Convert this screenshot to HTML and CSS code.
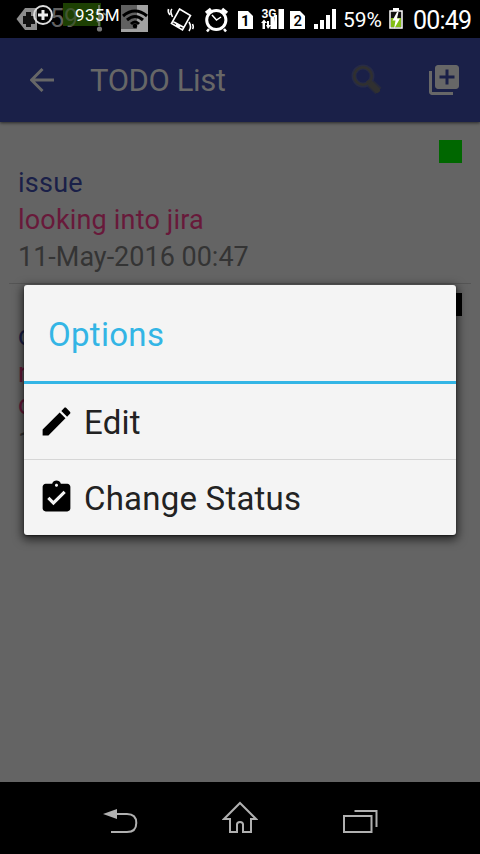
FILE: index.html
```html
<!DOCTYPE html>
<html lang="en">
<head>
<meta charset="utf-8">
<title>TODO List</title>
<link rel="stylesheet" href="styles.css">
</head>
<body>
<div class="phone">
  <header class="status">
    <svg class="notifications" width="160" height="38" viewBox="0 0 160 38">
      <path d="M25 8H37V30H25L16.500 19Z" fill="#8d8d8d"/>
      <path d="M26 12H31V16H35V24H31V27H26V24H23V16H26Z" fill="#111"/>
      <path d="M28 14V24M24 19H33" stroke="#111" stroke-width="3"/>
      <text x="50" y="27" font-size="25" fill="#555">59</text>
      <rect x="63" y="3" width="38" height="23" fill="#1d4003"/>
      <text x="50" y="27" font-size="25" fill="#777" opacity=".4">59</text>
      <path d="M99 5V26M96 12L102 17L97 22M103 13L106 15" stroke="#65735c" stroke-width="2" fill="none"/>
      <circle cx="99.500" cy="29" r="2.600" fill="#777"/>
      <circle cx="43" cy="15" r="9" fill="none" stroke="#ddd" stroke-width="2"/>
      <path d="M38 15H48M43 10V20" stroke="#eee" stroke-width="3"/>
      <rect x="121" y="5" width="27" height="27" fill="#a2a2a2"/>
      <rect x="121" y="5" width="16" height="24" fill="#606060"/>
      <g fill="none" stroke="#000" stroke-width="3"><path d="M123 16Q135 6 147 16M127 20Q135 13 143 20M131 24Q135 20 139 24"/></g>
      <circle cx="135" cy="26" r="2.300"/>
      <text x="75" y="21" font-size="17" textLength="44.500" fill="#fff">935M</text>
    </svg>
    <svg class="tray" width="181" height="38" viewBox="160 0 181 38">
      <g fill="none" stroke="#fff" stroke-width="1.600">
        <path d="M179.500 9L190.500 15.500L182.500 30L171.500 23.500ZM173 21.500L184 27.500M176 24.500L180 27M172 9Q169.500 11 172.500 17M168.500 9Q167.500 12 170 15M189 22Q192 27 189 31M192.500 24Q194 27 192.500 29"/>
      </g>
      <g fill="none" stroke="#fff">
        <circle cx="216.300" cy="20" r="9.600" stroke-width="3"/>
        <path d="M206 13L211 9M222 9L227 13" stroke-width="3.500"/>
        <path d="M209 29L207 31.500M224 29L226 31.500" stroke-width="2.500"/>
        <path d="M212 15L216.500 20L221 17" stroke-width="1.500"/>
      </g>
      <path d="M238 11H248L253 16V29H238Z" fill="#fff"/>
      <text x="241" y="25.500" font-size="15" font-weight="700">1</text>
      <text x="261.500" y="18" font-size="12" font-weight="700" textLength="15" fill="#fff">3G</text>
      <path d="M261 23L264 19.500L267 23H265V29H262.500V23ZM267 21H269V25H271L268 29L266 25H267ZM270.500 18H274.500V29H270.500ZM275 15H277V29H274ZM278.500 9H284V29H278.500Z" fill="#fff"/>
      <path d="M277.500 9V29" stroke="#000"/>
      <path d="M290 11H300L305 16V29H290Z" fill="#fff"/>
      <text x="293.500" y="25.500" font-size="15" font-weight="500">2</text>
      <path d="M314 24H318V29H314ZM320 20H324V29H320ZM326 15H330V29H326ZM332 9H336V29H332Z" fill="#fff"/>
    </svg>
    <span class="percent">59%</span>
    <svg class="battery" width="14" height="24" viewBox="0 0 14 24">
      <path d="M1 4H13V21H1Z" fill="#111" stroke="#fff" stroke-width="1.500"/>
      <path d="M4 1H10V4H4Z" fill="#fff"/>
      <path d="M2 11H12V20H2Z" fill="#82bd14"/>
      <path d="M8 5L3.500 13.500H6.500L5 22L11 11.500H8L9.500 5Z" fill="#fff"/>
    </svg>
    <span class="clock">00:49</span>
  </header>

  <nav class="appbar">
    <svg class="back" width="24" height="24" viewBox="0 0 24 24"><path d="M24 12H2M12.500 1L1.500 12L12.500 23" fill="none" stroke="#676767" stroke-width="3"/></svg>
    <h1 class="title">TODO List</h1>
    <svg class="search" width="32" height="32" viewBox="0 0 32 32">
      <g fill="none"><path d="M18 18L27.500 27" stroke="#272a3d" stroke-width="9"/><circle cx="12" cy="12" r="9" stroke="#272b46" stroke-width="5"/><path d="M16 17L20 21" stroke="#303030" stroke-width="3"/><path d="M20 20L26 26" stroke="#303030" stroke-width="6" stroke-linecap="round"/><circle cx="12" cy="12" r="8.800" stroke="#303030" stroke-width="2.500"/></g>
    </svg>
    <svg class="add" width="36" height="36" viewBox="0 0 24 24"><path fill="#676767" d="M4 6H2v14c0 1.100.9 2 2 2h14v-2H4V6zm16-4H8c-1.100 0-2 .9-2 2v12c0 1.100.9 2 2 2h12c1.100 0 2-.9 2-2V4c0-1.100-.9-2-2-2zm-1 9h-4v4h-2v-4H9V9h4V5h2v4h4v2z"/></svg>
  </nav>

  <main class="list">
    <article class="item">
      <i class="flag green"></i>
      <p class="name">issue</p>
      <p class="note">looking into jira</p>
      <p class="date">11-May-2016 00:47</p>
    </article>
    <article class="item">
      <i class="flag black"></i>
      <p class="name">c</p>
      <p class="note">n<br>c</p>
      <p class="date">1</p>
    </article>
  </main>

  <footer class="navbar">
    <svg width="36" height="34" viewBox="0 0 36 34"><path d="M1 14L15 9V19Z" fill="#b0b0b0"/><path d="M14 14H25Q34.300 14 34.300 23T25 32H9" fill="none" stroke="#b0b0b0" stroke-width="2"/></svg>
    <svg width="36" height="34" viewBox="0 0 36 34"><path d="M18 3L34 19H29V32H21V24.500Q21 22 18 22T15 24.500V32H8V19H2Z" fill="none" stroke="#b0b0b0" stroke-width="2"/></svg>
    <svg width="36" height="34" viewBox="0 0 36 34"><path d="M2 16H29.500V32H2ZM12.500 11H34.500V27" fill="none" stroke="#b0b0b0" stroke-width="2"/></svg>
  </footer>

  <section class="dialog">
    <h2 class="heading">Options</h2>
    <div class="option">
      <svg width="37" height="37" viewBox="0 0 24 24"><path d="M3 17.250V21h3.750L17.810 9.940l-3.750-3.750L3 17.250zM20.710 7.040c.39-.39.39-1.020 0-1.410l-2.340-2.340c-.39-.39-1.020-.39-1.410 0l-1.830 1.830 3.750 3.750 1.830-1.830z"/></svg>
      <span>Edit</span>
    </div>
    <div class="option">
      <svg width="37" height="37" viewBox="0 0 24 24"><path d="M19 3h-4.180C14.400 1.840 13.300 1 12 1c-1.300 0-2.400.84-2.820 2H5c-1.100 0-2 .9-2 2v14c0 1.100.9 2 2 2h14c1.100 0 2-.9 2-2V5c0-1.100-.9-2-2-2zm-7 0c.55 0 1 .45 1 1s-.45 1-1 1-1-.45-1-1 .45-1 1-1zm-2 14l-4-4 1.410-1.410L10 14.170l6.590-6.590L18 9l-8 8z"/></svg>
      <span>Change Status</span>
    </div>
  </section>
</div>
</body>
</html>
```
FILE: styles.css
```css
* { box-sizing: border-box; margin: 0; padding: 0; }
body { font-family: Roboto, "Liberation Sans", sans-serif; font-weight: 400; }
svg { display: block; flex: none; }
.phone { position: relative; width: 480px; height: 854px; display: flex; flex-direction: column; background: #646464; overflow: hidden; }

.status { height: 38px; flex: none; display: flex; background: #000; color: #fff; white-space: nowrap; }
.percent { width: 47px; padding-left: 2px; font-size: 21px; line-height: 41px; }
.battery { margin-top: 7px; margin-left: 1px; }
.clock { margin-left: 10px; font-size: 25px; line-height: 41px; letter-spacing: -.8px; }

.appbar { height: 84px; flex: none; display: flex; align-items: center; padding: 0 18px 0 30px; background: #1a2048; box-shadow: 0 1px 3px rgba(0, 0, 0, .6); z-index: 1; }
.title { margin-left: 36px; flex: 1; font-size: 31px; font-weight: 400; letter-spacing: -.4px; line-height: 38px; padding-top: 1px; color: #676767; white-space: nowrap; }
.add { margin-left: 43px; }

.list { flex: 1; padding: 18px 9px 0; color: #343434; font-size: 27px; line-height: 32px; }
.item { position: relative; height: 144px; padding: 27px 9px 0; border-bottom: 1px solid #555; }
.item + .item { height: 190px; border: 0; padding-top: 36px; }
.item p + p { margin-top: 5px; }
.flag { position: absolute; right: 9px; top: 0; width: 23px; height: 23px; }
.green { background: #006700; }
.black { background: #000; top: 9px; }
.name { color: #1a2048; letter-spacing: .25px; }
.note { color: #68193a; letter-spacing: .18px; }

.navbar { height: 72px; flex: none; display: flex; justify-content: space-between; padding: 18px 102px 0; background: #000; }

.dialog { position: absolute; z-index: 2; left: 24px; top: 285px; width: 432px; height: 250px; border-radius: 3px; background: #f4f4f4; box-shadow: 0 3px 10px 2px rgba(0, 0, 0, .6), 0 1px 2px rgba(0, 0, 0, .5); color: #222; }
.heading { height: 99px; padding-left: 24px; border-bottom: 3px solid #33b5e5; font-size: 33px; line-height: 100px; font-weight: 400; letter-spacing: .3px; color: #33b5e5; }
.option { height: 75px; display: flex; align-items: center; padding-left: 14px; font-size: 33px; letter-spacing: .22px; white-space: nowrap; }
.option + .option { height: 76px; border-top: 1px solid #d6d6d6; }
.option span { margin-left: 9px; line-height: 38px; padding-top: 2px; }
```
